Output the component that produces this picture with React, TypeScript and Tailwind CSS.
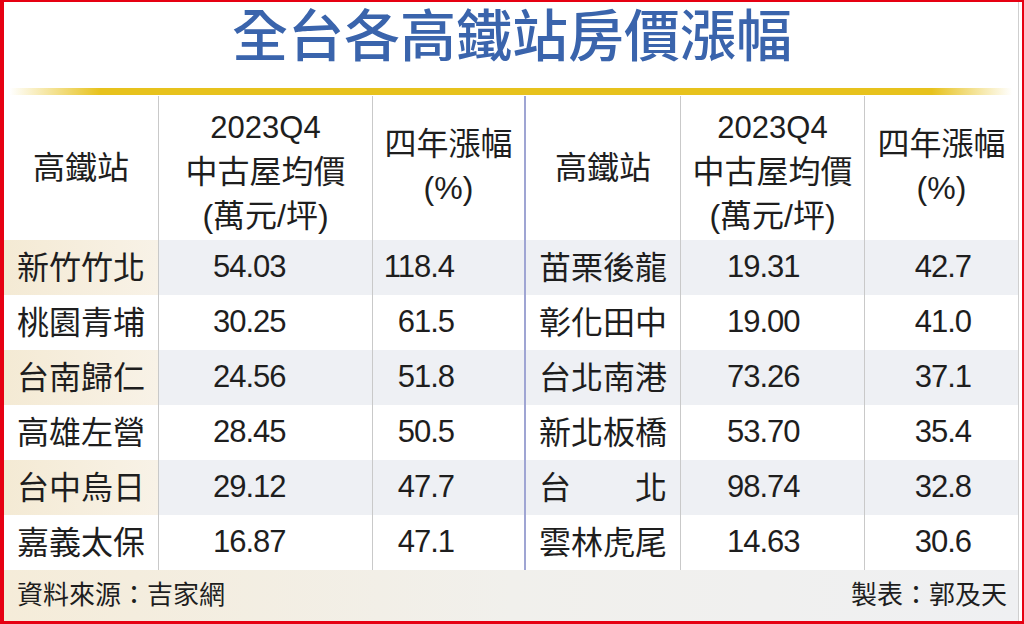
import React from 'react';

const rows = [
  ['新竹竹北', '54.03', '118.4', '苗栗後龍', '19.31', '42.7'],
  ['桃園青埔', '30.25', '61.5', '彰化田中', '19.00', '41.0'],
  ['台南歸仁', '24.56', '51.8', '台北南港', '73.26', '37.1'],
  ['高雄左營', '28.45', '50.5', '新北板橋', '53.70', '35.4'],
  ['台中烏日', '29.12', '47.7', '台　　北', '98.74', '32.8'],
  ['嘉義太保', '16.87', '47.1', '雲林虎尾', '14.63', '30.6'],
];

const font = { fontFamily: '"Liberation Sans", "Noto Sans CJK TC", sans-serif' };
const grid = 'grid grid-cols-[155px_214px_153px_155px_184px_153px]';

const PriceHead = () => (
  <div className="flex flex-col items-center leading-[44px]">
    <span className="text-[31px]">2023Q4</span>
    <span>中古屋均價</span>
    <span>(萬元/坪)</span>
  </div>
);

const RiseHead = () => (
  <div className="flex flex-col items-center leading-[44px] pb-1">
    <span>四年漲幅</span>
    <span>(%)</span>
  </div>
);

const App = () => {
  return (
    <div
      className="w-[1024px] h-[624px] bg-white border-[#e60012] border-l-4 border-t-2 border-r-2 border-b-[3px] pr-[3px] text-[#1e1e1e]"
      style={font}
    >
      <div className="h-full flex flex-col border-r border-[#cfcfcf]">
        {/* title */}
        <div className="h-[86px] flex items-center justify-center pb-[16px] pl-[2px]">
          <h1 className="text-[56px] leading-none font-medium text-[#3a64ac]">
            全台各高鐵站房價漲幅
          </h1>
        </div>
        <div className="h-[7px] mx-[6px] bg-[linear-gradient(to_right,#ffffff_0%,#e7c21d_9%,#e7c21d_92%,#ffffff_100%)]" />
        <div className="h-px" />

        {/* header */}
        <div className={`${grid} h-[144px] text-[32px]`}>
          <div className="flex items-center justify-center border-r border-[#c9c9c9]">高鐵站</div>
          <div className="flex items-center justify-center border-r border-[#c9c9c9] pt-[8px]"><PriceHead /></div>
          <div className="flex items-center justify-center border-r-2 border-[#9fa5d3]"><RiseHead /></div>
          <div className="flex items-center justify-center border-r border-[#c9c9c9]">高鐵站</div>
          <div className="flex items-center justify-center border-r border-[#c9c9c9] pt-[8px]"><PriceHead /></div>
          <div className="flex items-center justify-center"><RiseHead /></div>
        </div>

        {/* rows */}
        {rows.map((r, i) => {
          const odd = i % 2 === 0;
          const gray = odd ? 'bg-[#eef0f4]' : '';
          return (
            <div key={i} className={`${grid} h-[55px] text-[32px]`}>
              <div className={`flex items-center pl-[13px] border-r border-[#c9c9c9] ${odd ? 'bg-[linear-gradient(to_right,#f4ead4,#f8f2e7)]' : ''}`}>
                {r[0]}
              </div>
              <div className={`flex items-center pl-[54px] border-r border-[#c9c9c9] text-[31px] tracking-[-1px] ${gray}`}>
                {r[1]}
              </div>
              <div className={`flex items-center justify-end pr-[70px] border-r-2 border-[#9fa5d3] text-[31px] tracking-[-1px] ${gray}`}>
                {r[2]}
              </div>
              <div className={`flex items-center pl-[13px] border-r border-[#c9c9c9] ${gray}`}>
                {r[3]}
              </div>
              <div className={`flex items-center pl-[46px] border-r border-[#c9c9c9] text-[31px] tracking-[-1px] ${gray}`}>
                {r[4]}
              </div>
              <div className={`flex items-center justify-end pr-[47px] text-[31px] tracking-[-1px] ${gray}`}>
                {r[5]}
              </div>
            </div>
          );
        })}

        {/* footer */}
        <div className="flex-1 flex items-center justify-between pl-[13px] pr-[11px] text-[26px] bg-[linear-gradient(to_right,#f5ecd9,#f1f0ec_50%,#eff0f2)]">
          <span>資料來源：吉家網</span>
          <span>製表：郭及天</span>
        </div>
      </div>
    </div>
  );
};

export default App;
